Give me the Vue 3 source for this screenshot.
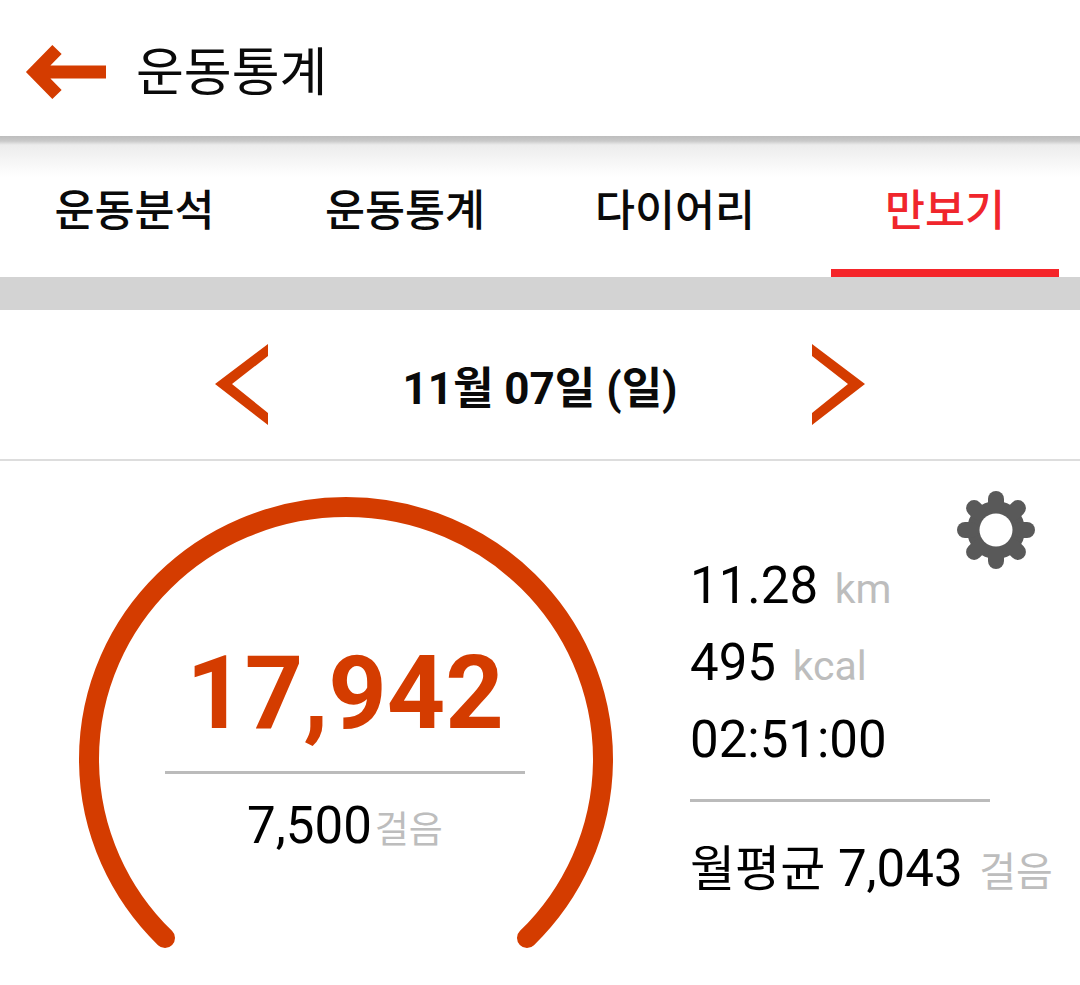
<template>
  <div class="screen">
    <header class="app-bar">
      <svg class="back" width="82" height="60" viewBox="0 0 82 60">
        <path d="M81 30H10M32 7.500 10 30l22 22.500" fill="none" stroke="#d43c00" stroke-width="13" />
      </svg>
      <h1 class="title">운동통계</h1>
    </header>

    <nav class="tabs">
      <div v-for="tab in tabs" :key="tab" class="tab" :class="{ active: tab === activeTab }">{{ tab }}</div>
    </nav>
    <div class="band"></div>

    <div class="date-row">
      <svg width="54" height="82" viewBox="0 0 54 82">
        <path d="M53 0 0 40l53 41V69L17 40 53 12Z" fill="#d43c00" />
      </svg>
      <span class="date">11월 07일 (일)</span>
      <svg width="54" height="82" viewBox="0 0 54 82">
        <path d="M0 0l53 40L0 81V69l36-29L0 12Z" fill="#d43c00" />
      </svg>
    </div>

    <section class="body">
      <div class="gauge">
        <svg class="arc" width="540" height="460" viewBox="0 0 540 460">
          <path d="M90 442A257 252 0 1 1 452 442" fill="none" stroke="#d43c00" stroke-width="20" stroke-linecap="round" />
        </svg>
        <div class="gauge-text">
          <div class="steps">17,942</div>
          <div class="goal"><span>7,500</span><small>걸음</small></div>
        </div>
      </div>

      <div class="stats">
        <div class="stat">11.28 <small>km</small></div>
        <div class="stat">495 <small>kcal</small></div>
        <div class="stat">02:51:00</div>
        <div class="avg"><b>월평균</b> 7,043 <small>걸음</small></div>
      </div>

      <svg class="gear" width="80" height="80" viewBox="0 0 80 80">
        <g fill="#595959">
          <circle cx="40" cy="40" r="29" />
          <rect v-for="a in teeth" :key="a" x="32" y="1" width="16" height="22" rx="8" :transform="`rotate(${a} 40 40)`" />
        </g>
        <circle cx="40" cy="40" r="16.500" fill="#fff" />
      </svg>
    </section>
  </div>
</template>

<script setup>
const tabs = ['운동분석', '운동통계', '다이어리', '만보기']
const activeTab = '만보기'
const teeth = [0, 45, 90, 135, 180, 225, 270, 315]
</script>

<style>
html,
body {
  margin: 0;
  background: #fff;
}
</style>

<style scoped>
.screen {
  width: 1080px;
  height: 985px;
  overflow: hidden;
  background: #fff;
  color: #000;
  font-family: Roboto, "Noto Sans CJK KR", sans-serif;
}

.app-bar {
  height: 136px;
  display: flex;
  align-items: center;
  gap: 29px;
  padding-left: 25px;
  padding-top: 8px;
  box-sizing: border-box;
}

.back {
  flex-shrink: 0;
}

.title {
  margin: 0;
  padding-top: 4px;
  font-size: 52px;
  font-weight: 400;
  line-height: 1;
  color: #0a0a0a;
}

.tabs {
  height: 141px;
  display: grid;
  grid-template-columns: 270px 270px 270px 249px;
  background: linear-gradient(#bdbdbd 0, #c9c9c9 5px, #ececec 9px, #fbfbfb 34px, #fff 42px);
}

.tab {
  display: flex;
  align-items: center;
  justify-content: center;
  padding-top: 2px;
  box-sizing: border-box;
  font-size: 43.500px;
  font-weight: 500;
  color: #0a0a0a;
}

.tab:nth-child(1) {
  padding-right: 1px;
}

.tab.active {
  margin-left: 21px;
  color: #f0262c;
  border-bottom: 8px solid #f5252a;
  padding-top: 10px;
}

.band {
  height: 33px;
  background: #d3d3d3;
}

.date-row {
  height: 151px;
  box-sizing: border-box;
  border-bottom: 2px solid #dddddd;
  display: grid;
  grid-template-columns: 54px 543px 54px;
  justify-content: center;
  align-items: center;
  justify-items: center;
}

.date {
  font-size: 44px;
  font-weight: 700;
  color: #0a0a0a;
}

.body {
  position: relative;
  display: flex;
}

.gauge {
  position: relative;
  width: 690px;
  height: 524px;
  flex-shrink: 0;
}

.arc {
  position: absolute;
  left: 75px;
  top: 35px;
}

.gauge-text {
  position: absolute;
  left: 165px;
  top: 172px;
  width: 360px;
  display: flex;
  flex-direction: column;
  align-items: center;
}

.steps {
  width: 100%;
  height: 138px;
  border-bottom: 3px solid #bbb;
  text-align: center;
  font-size: 102px;
  font-weight: 700;
  line-height: 120px;
  color: #d43c00;
}

.goal {
  margin-top: 20px;
  font-size: 51px;
  line-height: 64px;
  display: flex;
  align-items: baseline;
}

.goal small {
  font-size: 37px;
  margin-left: 3px;
  color: #bdbdbd;
}

.stats {
  display: flex;
  flex-direction: column;
  padding-top: 86px;
  width: 370px;
}

.stat {
  height: 77px;
  font-size: 51px;
  line-height: 77px;
  white-space: nowrap;
}

.stat small {
  font-size: 41px;
  margin-left: 4px;
  color: #bdbdbd;
}

.avg {
  width: 300px;
  margin-top: 21px;
  padding-top: 35px;
  border-top: 3px solid #bbb;
  font-size: 51px;
  line-height: 64px;
  white-space: nowrap;
}

.avg b {
  font-weight: 400;
  font-size: 49px;
}

.avg small {
  font-size: 40px;
  margin-left: 4px;
  color: #bdbdbd;
}

.gear {
  position: absolute;
  left: 956px;
  top: 29px;
}
</style>
